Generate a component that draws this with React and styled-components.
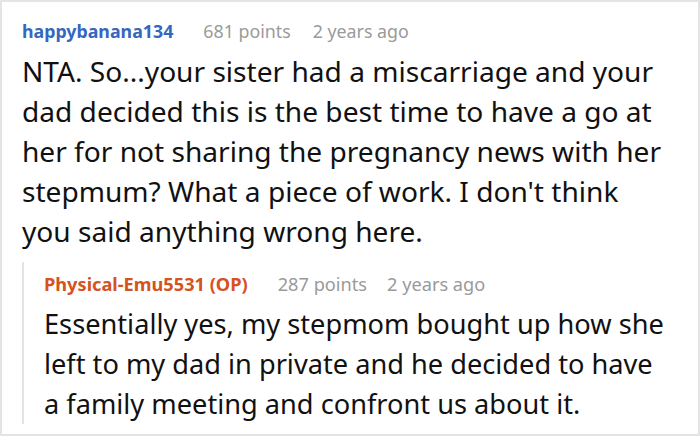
import React from 'react';
import styled, { createGlobalStyle } from 'styled-components';

const GlobalStyle = createGlobalStyle`
  html, body { margin: 0; padding: 0; background: #fff; }
  body { font-family: "Noto Sans", "Open Sans", sans-serif; }
`

const Frame = styled.div`
  box-sizing: border-box;
  width: 700px;
  height: 436px;
  border: 2px solid #e4e4e4;
  padding: 17px 0 0 20px;
  background: #fff;
  overflow: hidden;
`

const Header = styled.div`
  display: flex;
  align-items: baseline;
  height: 24px;
  line-height: 24px;
  font-size: ${p => p.$reply ? '18.2px' : '17.8px'};
`

const Author = styled.span`
  font-weight: 700;
  color: ${p => p.$op ? '#d4531f' : '#3667bf'};
  margin-right: 30px;
`

const Meta = styled.span`
  color: #9a9a9a;
  margin-right: ${p => p.$tight ? '20px' : '22px'};
`

const Body = styled.div`
  margin: 8px 0 0 0;
  font-size: ${p => p.$reply ? '27.2px' : '28.1px'};
  line-height: 40px;
  color: #111;
`

const Line = styled.div`
  white-space: nowrap;
`

const Reply = styled.div`
  margin-top: 21px;
`

const Thread = styled.div`
  border-left: 2px solid #e4e4e4;
  padding-left: 20px;
  margin-top: -10px;
  padding-top: 10px;
`

const Comment = ({ author, points, age, op, reply, lines }) => (
  <>
    <Header $reply={reply}>
      <Author $op={op}>{author}</Author>
      <Meta $tight={reply}>{points} points</Meta>
      <Meta>{age}</Meta>
    </Header>
    <Body $reply={reply}>
      {lines.map((l, i) => <Line key={i}>{l}</Line>)}
    </Body>
  </>
);

const parentLines = [
  'NTA. So...your sister had a miscarriage and your',
  'dad decided this is the best time to have a go at',
  'her for not sharing the pregnancy news with her',
  "stepmum? What a piece of work. I don't think",
  'you said anything wrong here.',
];

const replyLines = [
  'Essentially yes, my stepmom bought up how she',
  'left to my dad in private and he decided to have',
  'a family meeting and confront us about it.',
];

export default function App() {
  return (
    <>
      <GlobalStyle />
      <Frame>
        <Comment author="happybanana134" points="681" age="2 years ago" lines={parentLines} />
        <Reply>
          <Thread>
            <Comment author="Physical-Emu5531 (OP)" points="287" age="2 years ago" op reply lines={replyLines} />
          </Thread>
        </Reply>
      </Frame>
    </>
  );
}
